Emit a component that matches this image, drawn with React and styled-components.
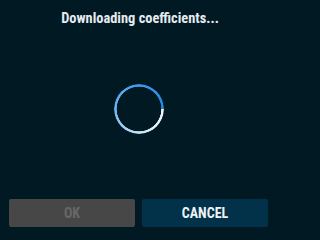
import React from "react";
import styled, { createGlobalStyle } from "styled-components";

const Global = createGlobalStyle`
  html, body { margin: 0; padding: 0; background: #011923; }
  * { box-sizing: border-box; }
`;

const Dialog = styled.div`
  width: 277px;
  height: 236px;
  background: #011923;
  display: flex;
  flex-direction: column;
  padding: 9px;
  font-family: "Roboto Condensed", "DejaVu Sans Condensed", sans-serif;
`;

const Title = styled.div`
  color: #e4ecf0;
  font-size: 14.4px;
  font-weight: bold;
  line-height: 20px;
  text-align: center;
  padding-left: 3px;
`;

const SpinnerArea = styled.div`
  flex: 1;
  display: flex;
  justify-content: center;
  align-items: flex-start;
  padding-top: 55px;
  padding-left: 1px;
`;

const Ring = styled.div`
  width: 50px;
  height: 50px;
  border-radius: 50%;
  background: conic-gradient(
    from 90deg,
    #f3f9fe 0deg,
    #c9e3f8 90deg,
    #6db3ee 180deg,
    #3c9ae8 270deg,
    #1f88e4 360deg
  );
  -webkit-mask: radial-gradient(farthest-side, transparent calc(100% - 3px), #000 calc(100% - 2.4px));
  mask: radial-gradient(farthest-side, transparent calc(100% - 3px), #000 calc(100% - 2.4px));
`;

const Buttons = styled.div`
  display: grid;
  grid-template-columns: 1fr 1fr;
  gap: 7px;
`;

const Button = styled.button`
  height: 28px;
  border: none;
  border-radius: 2px;
  font-family: inherit;
  font-size: 14px;
  font-weight: bold;
  background: ${(p) => (p.$disabled ? "#474747" : "#02314a")};
  color: ${(p) => (p.$disabled ? "#676767" : "#eef3f6")};
  padding: 0;
`;

export default function App() {
  return (
    <>
      <Global />
      <Dialog>
        <Title>Downloading coefficients...</Title>
        <SpinnerArea>
          <Ring />
        </SpinnerArea>
        <Buttons>
          <Button $disabled>OK</Button>
          <Button>CANCEL</Button>
        </Buttons>
      </Dialog>
    </>
  );
}
